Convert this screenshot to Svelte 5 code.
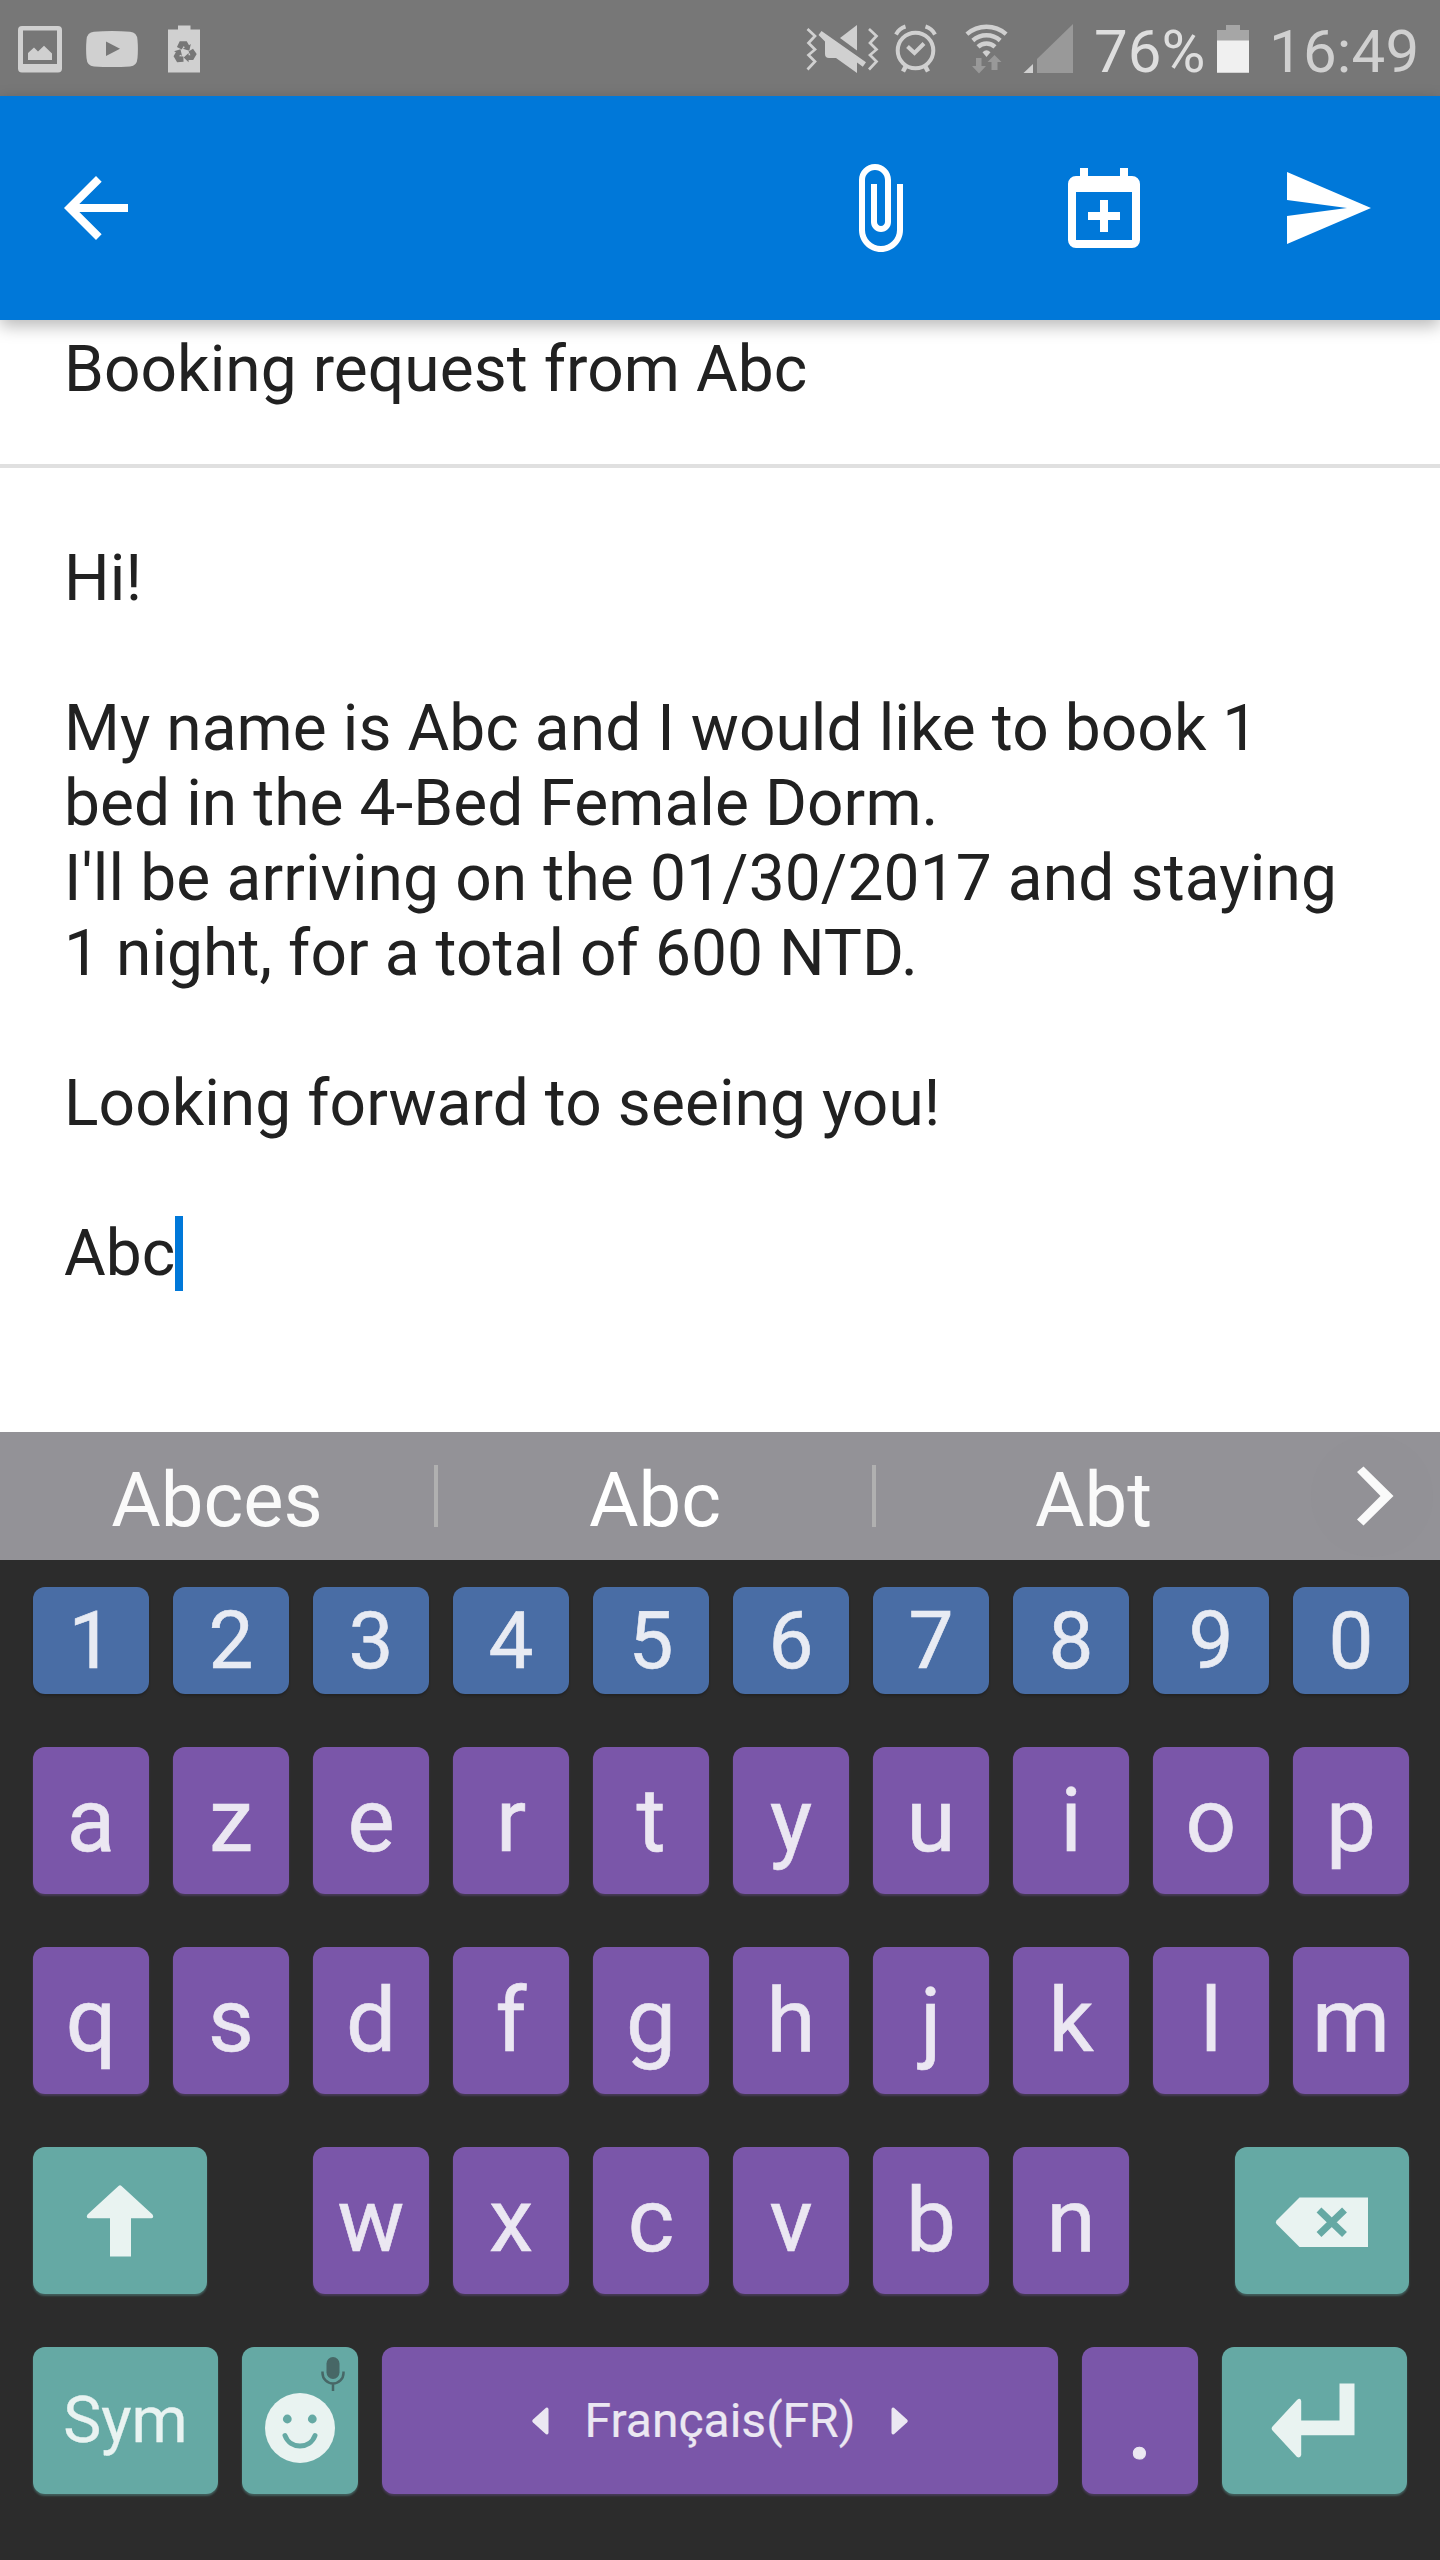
<script>
  const lines = [
    { text: 'Hi!' },
    { text: '' },
    { text: 'My name is Abc and I would like to book 1' },
    { text: 'bed in the 4-Bed Female Dorm.' },
    { text: "I'll be arriving on the 01/30/2017 and staying", dated: true },
    { text: '1 night, for a total of 600 NTD.' },
    { text: '' },
    { text: 'Looking forward to seeing you!' },
    { text: '' }
  ];
  const digits = [...'1234567890'];
  const rows = [[...'azertyuiop'], [...'qsdfghjklm']];
  const thirdRow = [...'wxcvbn'];
</script>

<div class="screen">
  <header class="status">
    <div class="notes">
      <svg width="44" height="48" viewBox="18 25 44 48">
        <path fill-rule="evenodd" d="M22 26H58Q62 26 62 30V68.5Q62 72.5 58 72.5H22Q18 72.5 18 68.5V30Q18 26 22 26ZM23 30.5V64H57V30.5Z" />
        <path d="M28 60V53L34 47.5L38 51.5L44 45.7L52 53.5V60Z" />
      </svg>
      <svg width="52" height="48" viewBox="86 25 52 48">
        <path fill-rule="evenodd" d="M94 31.7Q112 30.3 130 31.7Q137 32 137.5 40Q138.300 49 137.500 58Q137 66 130 66.500Q112 67.700 94 66.500Q87 66 86.500 58Q85.700 49 86.500 40Q87 32 94 31.700ZM106 41.500V56L120 48.700Z" />
      </svg>
      <svg width="32" height="48" viewBox="168 25 32 48">
        <path d="M168 29.500H178V25.500H190.500V29.500H200V72.500H168Z" />
        {#each [0, 120, 240] as turn}
          <path class="cut" transform="rotate({turn} 184.500 52.500)" d="M183.700 57.600L188.600 53V55.200H190.500L188.500 51.500L193 48.700L196.700 54L193.200 60.100H188.600V62.200Z" />
        {/each}
      </svg>
    </div>

    <div class="system">
      <svg class="mute" width="74" height="50" viewBox="805 24 74 50">
        <g class="line" stroke-width="2.700">
          <path d="M807.500 29L815 36L808.500 43L815 49.500L808.500 55L815 61.500L807.500 69.500" />
          <path d="M869 29L876.500 36L870 43L876.500 49.500L870 55L876.500 61.500L869 69.500" />
        </g>
        <path d="M840 38L857 25V50.500Z" />
        <path d="M821.500 31L866 62.300L862.800 66.800L857 62.500V73L836 58H829Q825 58 825 54V41.500L818.500 35Z" />
      </svg>
      <svg class="alarm" width="44" height="50" viewBox="894 24 44 50">
        <g class="line" stroke-width="4">
          <circle cx="915.500" cy="50.500" r="17.800" />
          <path d="M907.500 46.500L914.500 53L924 43.500" />
          <path d="M896 34.500Q899 28.500 905.500 26.500M935 34.500Q932 28.500 925.500 26.500" />
          <path stroke-width="4.500" d="M906.500 65L903 71.500M924.500 65L928 71.500" />
        </g>
      </svg>
      <svg class="wifi" width="44" height="50" viewBox="965 24 44 50">
        <g class="line" stroke-width="4.400">
          <path d="M966.900 34.100A29.800 29.800 0 0 1 1006.100 34.100" />
          <path d="M972.800 40.500A20.700 20.700 0 0 1 1000.200 40.500" />
          <path d="M978 46.800A12.500 12.500 0 0 1 995 46.800" />
        </g>
        <path d="M986.500 57L982.500 52.300Q986.500 48 990.500 52.300Z" />
        <path class="dim" d="M976 58H981.500V66H986L979 73.500L972 66H976ZM991.500 70V62H987.500L994.500 55L1001.500 62H997.500V70Z" />
      </svg>
      <svg class="signal" width="50" height="50" viewBox="1023 24 50 50">
        <path d="M1023.500 73L1033 64V73Z" />
        <path class="dim" d="M1037 73V59L1073 24V73Z" />
      </svg>
      <span class="percent">76%</span>
      <svg class="battery" width="32" height="48" viewBox="1217 25 32 48">
        <path class="empty" d="M1217 30H1226V25H1240V30H1249V41H1217Z" />
        <path class="full" d="M1217 40.500H1249V72.700H1217Z" />
      </svg>
      <span class="clock">16:49</span>
    </div>
  </header>

  <nav class="toolbar">
    <svg width="96" height="96" viewBox="0 0 24 24"><path d="M20 11H7.830l5.590-5.590L12 4l-8 8 8 8 1.410-1.410L7.830 13H20v-2z" /></svg>
    <svg class="attach" width="96" height="96" viewBox="0 0 24 24"><path d="M16.500 6v11.500c0 2.210-1.790 4-4 4s-4-1.790-4-4V5c0-1.380 1.120-2.500 2.500-2.500s2.500 1.120 2.500 2.500v10.500c0 .55-.45 1-1 1s-1-.45-1-1V6H10v9.500c0 1.380 1.120 2.500 2.500 2.500s2.500-1.120 2.500-2.500V5c0-2.210-1.790-4-4-4S7 2.790 7 5v12.500c0 3.040 2.460 5.500 5.500 5.500s5.500-2.460 5.500-5.500V6h-1.500z" /></svg>
    <svg class="event" width="96" height="96" viewBox="0 0 24 24"><path fill-rule="evenodd" d="M6 2h2v2h8V2h2v2h1a2 2 0 0 1 2 2v14a2 2 0 0 1-2 2H5a2 2 0 0 1-2-2V6a2 2 0 0 1 2-2h1zM5 8v12h14V8zM11 10h2v3h3v2h-3v3h-2v-3H8v-2h3z" /></svg>
    <svg class="send" width="96" height="96" viewBox="0 0 24 24"><path d="M2.010 21L23 12 2.010 3 2 10l15 2-15 2z" /></svg>
  </nav>

  <main>
    <div class="subject">Booking request from Abc</div>
    <div class="message">
      {#each lines as line}
        <p class:dated={line.dated}>{line.text}</p>
      {/each}
      <p class="typing">Abc<span class="caret"></span></p>
    </div>
  </main>

  <section class="suggestions">
    <span>Abces</span>
    <span class="chosen">Abc</span>
    <span>Abt</span>
    <div class="more">
      <svg width="38" height="60" viewBox="0 0 38 60"><path d="M1 6L7.500 0.500L37.500 30L7.500 59.500L1 53.500L24.500 30Z" /></svg>
    </div>
  </section>

  <section class="keyboard">
    <div class="row numbers">
      {#each digits as d}<div class="key digit">{d}</div>{/each}
    </div>
    {#each rows as row}
      <div class="row">
        {#each row as k}<div class="key">{k}</div>{/each}
      </div>
    {/each}
    <div class="row third">
      <div class="key action">
        <svg width="68" height="74" viewBox="86 2184 68 74"><path d="M118.500 2186Q120 2184.600 121.500 2186L152.500 2214.500Q154.300 2218 151.500 2218.300H131V2256.500H110V2218.300H88.500Q85.700 2218 87.500 2214.500Z" /></svg>
      </div>
      <div class="letters">
        {#each thirdRow as k}<div class="key">{k}</div>{/each}
      </div>
      <div class="key action">
        <svg class="erase" width="94" height="50" viewBox="1275 2196.500 94 50">
          <path d="M1276.500 2220L1299.500 2197H1368V2246.500H1299.500L1276.500 2223.500Q1275 2221.700 1276.500 2220Z" />
          <path class="mark" d="M1319 2209.500L1344.500 2234M1344.500 2209.500L1319 2234" />
        </svg>
      </div>
    </div>
    <div class="row bottom">
      <div class="key action sym">Sym</div>
      <div class="key action">
        <svg width="116" height="147" viewBox="242 2347 116 147">
          <circle cx="300" cy="2428" r="35" />
          <circle class="hole" cx="287.300" cy="2419" r="4.400" />
          <circle class="hole" cx="312.300" cy="2419" r="4.400" />
          <path class="smile" d="M285 2435.500C290 2449.500 310 2449.500 315 2435.500" />
          <rect class="mic" x="326.500" y="2357" width="13" height="22" rx="6.500" />
          <path class="stand" d="M322.500 2371.500V2373A10.500 10.500 0 0 0 343.500 2373V2371.500M333 2383V2391" />
        </svg>
      </div>
      <div class="key space">
        <svg width="17" height="28" viewBox="0 0 17 28"><path d="M14 0.700Q16.500 0 16.500 2.500V25.500Q16.500 28 14 27.300L1 15.500Q-0.500 14 1 12.500Z" /></svg>
        <span>Français(FR)</span>
        <svg class="flip" width="17" height="28" viewBox="0 0 17 28"><path d="M14 0.700Q16.500 0 16.500 2.500V25.500Q16.500 28 14 27.300L1 15.500Q-0.500 14 1 12.500Z" /></svg>
      </div>
      <div class="key stop">.</div>
      <div class="key action">
        <svg class="enter" width="84" height="76" viewBox="1271.500 2383.500 84 76"><path d="M1340 2384H1355V2435.700H1301.700V2455.500Q1301 2459 1297.500 2457.500L1273 2431Q1271.300 2429 1273 2427L1297.500 2400.500Q1301 2397.500 1301.700 2401.500V2421H1340Z" /></svg>
      </div>
    </div>
  </section>
</div>

<style>
  :global(body) { margin: 0; }
  .screen {
    width: 1440px;
    height: 2560px;
    display: flex;
    flex-direction: column;
    background: #fff;
    font-family: Roboto, sans-serif;
    overflow: hidden;
  }
  svg { display: block; flex: none; }

  .status {
    height: 96px;
    box-sizing: border-box;
    display: flex;
    justify-content: space-between;
    background: #777;
    color: #d0d0d0;
    font-size: 60px;
    line-height: 103px;
  }
  .status svg { fill: #d0d0d0; }
  .notes { display: flex; gap: 24px; padding: 25px 0 0 18px; }
  .notes svg:last-child { margin-left: 6px; }
  .status .cut { fill: #777; }
  .system { display: flex; align-items: flex-start; width: 635px; }
  .system svg { margin-top: 24px; }
  .line { fill: none; stroke: #d0d0d0; }
  .alarm { margin-left: 15px; }
  .wifi { margin-left: 27px; }
  .signal { margin-left: 14px; }
  .status .dim { fill: #999; }
  .percent { width: 123px; margin-left: 21px; color: #dedede; }
  .system .battery { margin-top: 25px; }
  .battery .empty { fill: #a6a6a6; }
  .battery .full { fill: #f0f0f0; }
  .clock { margin-left: 20px; letter-spacing: 0.2px; }

  .toolbar {
    height: 224px;
    box-sizing: border-box;
    padding: 64px 65.5px 0 48px;
    display: flex;
    flex: none;
    background: #0078d9;
    box-shadow: 0 6px 16px rgba(0, 0, 0, 0.28);
    z-index: 1;
  }
  .toolbar svg { fill: #fff; }
  .attach { margin-left: auto; }
  .event { margin-left: 129.5px; }
  .send { margin-left: 126.5px; }

  main {
    height: 1112px;
    flex: none;
    color: #212121;
    font-size: 64px;
    line-height: 75px;
    letter-spacing: 0.08px;
  }
  .subject { height: 132px; padding: 12px 64px 0; border-bottom: 4px solid #e0e0e0; }
  .message { padding: 73px 64px 0; }
  p { margin: 0; height: 75px; white-space: pre; }
  .dated { letter-spacing: 0.14px; }
  .typing { display: flex; }
  .caret { width: 8px; height: 75px; background: #0078d9; }

  .suggestions {
    height: 128px;
    flex: none;
    display: grid;
    grid-template-columns: 438px 438px 435px 129px;
    background: #939297;
    color: #fafafa;
    font-size: 76px;
    line-height: 136px;
    text-align: center;
  }
  .suggestions span {
    background: linear-gradient(#b0b0b0, #b0b0b0) no-repeat right 33px / 4px 62px;
    padding-right: 4px;
  }
  .suggestions span:nth-child(3) { background: none; padding: 0; }
  .suggestions .chosen { color: #fff; }
  .more {
    width: 122px;
    height: 122px;
    margin-top: 3px;
    border-radius: 50%;
    background: #929196;
    display: flex;
    align-items: center;
    justify-content: center;
  }
  .more svg { fill: #fafafa; margin-left: 5px; }

  .keyboard {
    flex: 1;
    box-sizing: border-box;
    padding: 27px 31px 0 33px;
    background: #2c2c2c;
    display: flex;
    flex-direction: column;
    gap: 53px;
  }
  .row { display: grid; grid-template-columns: repeat(10, 116px); gap: 24px; height: 147px; }
  .numbers { height: 107px; }
  .key {
    display: flex;
    align-items: center;
    justify-content: center;
    border-radius: 12px;
    background: #7a56a9;
    box-shadow: 0 2px 2px rgba(123, 85, 170, 0.35);
    color: #ebe7f2;
    fill: #ebe7f2;
    font-size: 89px;
    line-height: 1;
    -webkit-text-stroke: 0.6px currentColor;
  }
  .digit { background: #496da5; box-shadow: 0 2px 2px #242424; color: #e8ebf3; font-size: 80px; }
  .letters { display: flex; gap: 24px; justify-self: center; }
  .letters .key { width: 116px; }
  .third { grid-template-columns: 174px 1028px 174px; gap: 0; }
  .action {
    background: #65a9a4;
    box-shadow: 0 2px 2px rgba(101, 169, 164, 0.4);
    color: #e9f3f1;
    fill: #e9f3f1;
  }
  .erase { margin-top: 2px; }
  .mark { stroke: #65a9a4; stroke-width: 7; }
  .bottom { grid-template-columns: 185px 116px 676px 116px 185px; }
  .sym { font-size: 64px; -webkit-text-stroke-width: 0.3px; padding-top: 1px; box-sizing: border-box; }
  .hole { fill: #65a9a4; }
  .smile { fill: none; stroke: #65a9a4; stroke-width: 5; stroke-linecap: round; }
  .mic { fill: #476766; }
  .stand { fill: none; stroke: #476766; stroke-width: 2.5; }
  .space { font-size: 48px; gap: 36px; -webkit-text-stroke-width: 0.2px; }
  .flip { transform: scaleX(-1); }
  .stop { font-size: 108px; -webkit-text-stroke-width: 1px; }
  .enter { margin-left: -3px; }
</style>
